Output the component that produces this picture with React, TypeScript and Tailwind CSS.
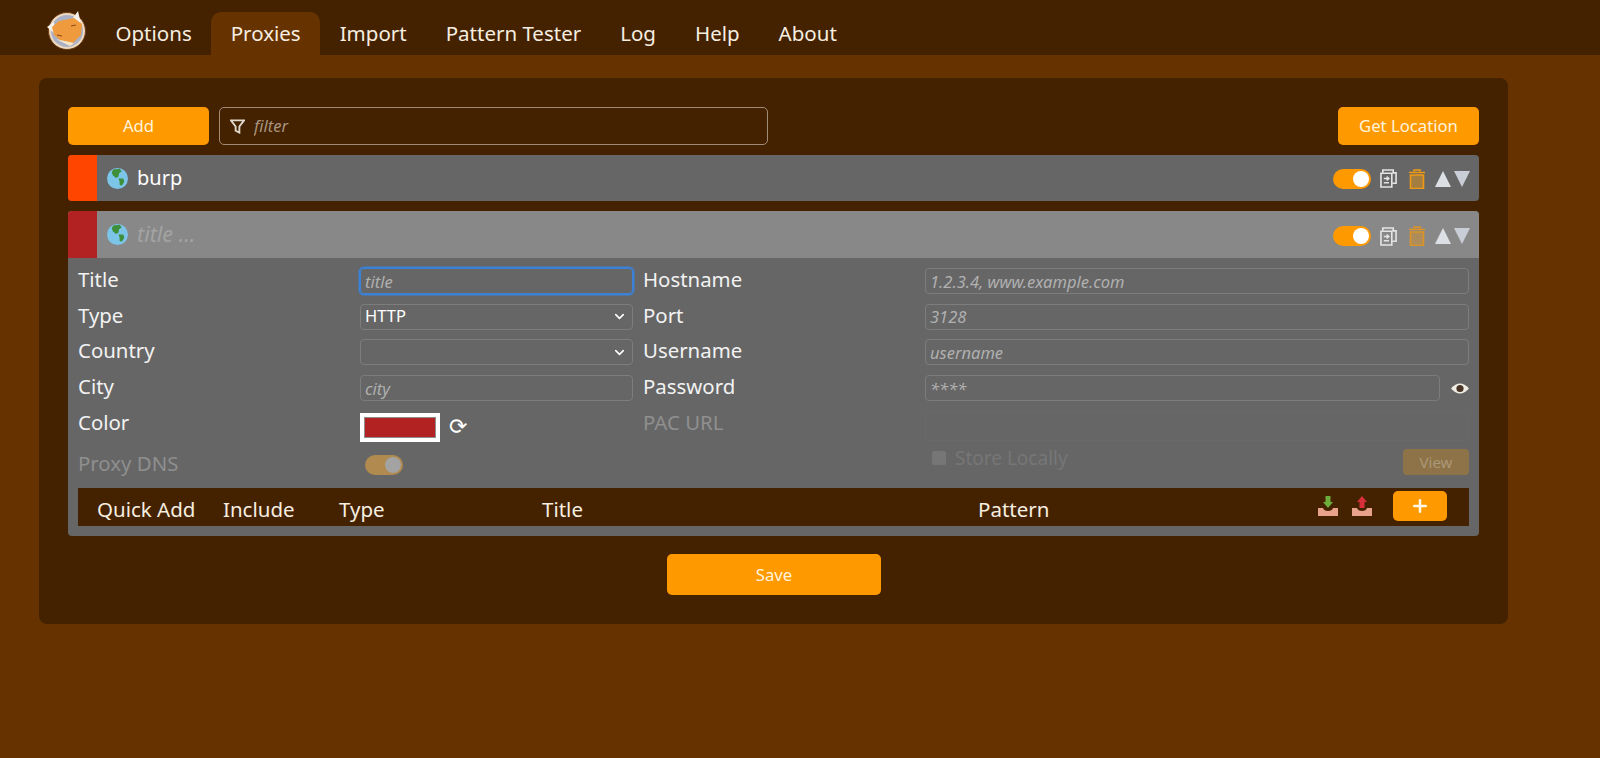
import { ChevronDown, Plus } from "lucide-react";

const FONT = "[font-family:'Noto_Sans','Open_Sans',sans-serif]";

const NAV = ["Options", "Proxies", "Import", "Pattern Tester", "Log", "Help", "About"];

function Logo() {
  return (
    <svg viewBox="0 0 42 40" className="w-[42px] h-[40px]">
      <circle cx="21" cy="21" r="18.5" fill="#efd9c0" stroke="#6b3c12" strokeWidth="1" />
      <circle cx="21" cy="21" r="16" fill="#aab1c6" />
      <path d="M8 12 L1 17 L9 24 Z M27 8 L32 1 L35 14 Z" fill="#f4f1ea" />
      <path d="M6 17 L13 11 L28 8 L36 14 L35 25 L27 33 L14 30 L8 25 Z" fill="#ef9a3c" />
      <path d="M10 29 L24 36 L34 29 L28 33 L14 30 Z" fill="#f7e6c8" />
      <path d="M25 16 L30 15 M11 25 L16 26" stroke="#8a4a14" strokeWidth="1" fill="none" />
    </svg>
  );
}

function Globe() {
  return (
    <svg viewBox="0 0 20 20" className="w-[21px] h-[21px]">
      <circle cx="10" cy="10" r="10" fill="#7cc4e8" />
      <path d="M6 1.5 L12 .6 L14 3 L11.5 5 L11 8 L8.5 9.5 L5.5 7 L4.5 4 Z" fill="#3f8f3a" />
      <path d="M11 10 L15.5 10 L16.5 13 L14 17 L12 16 L12 13 Z" fill="#3f8f3a" />
    </svg>
  );
}

function Copy() {
  return (
    <svg viewBox="0 0 18 20" className="w-[17px] h-[19px]" fill="none" stroke="#e4e4e4" strokeWidth="1.7">
      <path d="M3 4 V1 H14 V4" />
      <path d="M13 4 H17 V15 H13" />
      <path d="M1 4.5 H12.5 V19 H1 Z" />
      <path d="M4 10 H9 M7 8 L9.5 10 L7 12 M9.5 14.5 H4" strokeWidth="1.4" />
    </svg>
  );
}

function Trash({ faded }: { faded?: boolean }) {
  const c = faded ? "#dd9424" : "#f09a14";
  return (
    <svg viewBox="0 0 16 20" className="w-[16px] h-[20px]">
      <path d="M5 2.5 V1 H11 V2.5 M0 3.5 H16" stroke={c} strokeWidth="1.6" fill="none" />
      <path d="M1.5 6 H14.5 V19.5 H1.5 Z" stroke={c} strokeWidth="1.6" fill={c} fillOpacity="0.45" />
    </svg>
  );
}

function Toggle({ faded }: { faded?: boolean }) {
  return (
    <div
      className={`w-[38px] h-[20px] rounded-full flex items-center justify-end px-[2px] ${
        faded ? "bg-[#b08a4e]" : "bg-[#ff9900]"
      }`}
    >
      <div className={`w-[16px] h-[16px] rounded-full ${faded ? "bg-[#a3a3a3]" : "bg-white"}`} />
    </div>
  );
}

function RowIcons({ faded }: { faded?: boolean }) {
  return (
    <div className={`flex items-center mr-[8px] ${faded ? "mt-[3px]" : "mt-[1px]"}`}>
      <Toggle />
      <div className="ml-[9px]">
        <Copy />
      </div>
      <div className="ml-[12px]">
        <Trash faded={faded} />
      </div>
      <svg viewBox="0 0 36 16" className="w-[36px] h-[16px] ml-[10px]">
        <path d="M0 16 L8 0 L16 16 Z" fill="#dcdfe4" />
        <path d="M19 0 L35 0 L27 16 Z" fill="#c9ced6" />
      </svg>
    </div>
  );
}

function Tray({ arrow, up }: { arrow: string; up?: boolean }) {
  return (
    <svg viewBox="0 0 20 22" className="w-[20px] h-[22px]">
      <path d="M0 13 H5 Q6 16 10 16 Q14 16 15 13 H20 V21 H0 Z" fill="#e8a28c" />
      <path
        d={up ? "M10 1 L15 7 H12.5 V13 H7.5 V7 H5 Z" : "M7.5 1 H12.5 V7 H15 L10 13 L5 7 H7.5 Z"}
        fill={arrow}
      />
    </svg>
  );
}

function Label({ children, faded }: { children: string; faded?: boolean }) {
  return (
    <div className={`text-[20.4px] leading-[26px] pb-[4px] ${faded ? "text-[#8f8f8f]" : "text-[#f2f2f2]"}`}>
      {children}
    </div>
  );
}

const inputBase =
  "block h-[26px] w-full rounded-[4px] border bg-transparent px-[4px] text-[16.5px] placeholder:italic placeholder:text-[#b0b0b0]";
const inputCls = `${inputBase} border-[#7d7d7d] outline-none`;

function Select({ value }: { value?: string }) {
  return (
    <div className="h-[26px] rounded-[4px] border border-[#7d7d7d] flex items-center justify-between pl-[4px] pr-[5px] text-[16.5px] text-white">
      <span>{value}</span>
      <ChevronDown size={15} strokeWidth={2.5} />
    </div>
  );
}

export default function App() {
  return (
    <div className={`min-h-[758px] bg-[#663300] text-white ${FONT}`}>
      <nav className="h-[55px] bg-[#442200] flex items-end pl-[46px]">
        <div className="mb-[5px] mr-[8px]">
          <Logo />
        </div>
        {NAV.map((item) => (
          <div
            key={item}
            className={`h-[43px] px-[19.5px] flex items-center text-[20.5px] rounded-t-[10px] text-[#f6eee0] ${
              item === "Proxies" ? "bg-[#663300]" : ""
            }`}
          >
            {item}
          </div>
        ))}
      </nav>

      <main className="ml-[39px] mt-[23px] w-[1469px] h-[546px] rounded-[8px] bg-[#442200] pt-[29px] px-[29px]">
        <div className="flex items-center h-[38px]">
          <button className="w-[141px] h-full rounded-[5px] bg-[#ff9900] text-[16.7px] text-[#fff3dc]">Add</button>
          <div className="ml-[10px] w-[549px] h-full rounded-[5px] border border-[#a08a78] flex items-center pl-[10px]">
            <svg viewBox="0 0 16 16" className="w-[15px] h-[15px] shrink-0" fill="none" stroke="#e0d8cc" strokeWidth="2">
              <path d="M1 1.5 H15 L10 8 V14.5 L6 12.5 V8 Z" />
            </svg>
            <input
              placeholder="filter"
              className="ml-[9px] w-full bg-transparent text-[16.5px] outline-none placeholder:italic placeholder:text-[#a8947e]"
            />
          </div>
          <button className="ml-auto w-[141px] h-full rounded-[5px] bg-[#ff9900] text-[16.7px] text-[#fff3dc]">
            Get Location
          </button>
        </div>

        <div className="mt-[10px] h-[46px] rounded-[4px] bg-[#666666] flex items-center overflow-hidden">
          <div className="w-[29px] h-full bg-[#ff4500] shrink-0" />
          <div className="ml-[10px]">
            <Globe />
          </div>
          <span className="ml-[9px] text-[20px] flex-1">burp</span>
          <RowIcons />
        </div>

        <div className="mt-[10px] h-[325px] rounded-[4px] bg-[#666666] overflow-hidden">
          <div className="h-[47px] bg-[#888888] flex items-center">
            <div className="w-[29px] h-full bg-[#b22222] shrink-0" />
            <div className="ml-[10px]">
              <Globe />
            </div>
            <span className="ml-[9px] text-[21.5px] italic text-[#a3a3a3] flex-1">title ...</span>
            <RowIcons faded />
          </div>

          <div className="px-[10px]">
            <div className="pt-[10px] grid grid-cols-[282px_283px_282px_1fr] auto-rows-[26px] gap-y-[9.7px] items-center">
              <Label>Title</Label>
              <div className="pr-[10px]">
                <input
                  placeholder="title"
                  className={`${inputBase} border-[#3b82d6] shadow-[0_0_0_1.5px_#3b82d6] outline-none`}
                />
              </div>
              <Label>Hostname</Label>
              <input placeholder="1.2.3.4, www.example.com" className={inputCls} />

              <Label>Type</Label>
              <div className="pr-[10px]">
                <Select value="HTTP" />
              </div>
              <Label>Port</Label>
              <input placeholder="3128" className={inputCls} />

              <Label>Country</Label>
              <div className="pr-[10px]">
                <Select />
              </div>
              <Label>Username</Label>
              <input placeholder="username" className={inputCls} />

              <Label>City</Label>
              <div className="pr-[10px]">
                <input placeholder="city" className={inputCls} />
              </div>
              <Label>Password</Label>
              <div className="flex items-center">
                <input placeholder="****" className={inputCls} />
                <svg viewBox="0 0 20 14" className="w-[18px] h-[13px] ml-[11px] shrink-0">
                  <path d="M0 7 Q10 -4 20 7 Q10 18 0 7 Z" fill="#f0ece6" />
                  <circle cx="10" cy="7" r="4" fill="#4a3626" />
                </svg>
              </div>

              <div className="self-start -mt-[2px]">
                <Label>Color</Label>
              </div>
              <div className="flex items-center self-start mt-[2px]">
                <div className="w-[80px] h-[29px] bg-white p-[4px] shrink-0">
                  <div className="w-full h-full bg-[#b22222] border border-[#8f8f8f]" />
                </div>
                <span className="ml-[9px] text-[22px] leading-none font-['DejaVu_Sans'] text-white">⟳</span>
              </div>
              <div className="self-start -mt-[2px]">
                <Label faded>PAC URL</Label>
              </div>
              <div className="self-start h-[30px] rounded-[4px] border border-[#696969]" />
            </div>

            <div className="mt-[7px] grid grid-cols-[282px_283px_282px_1fr] h-[26px] items-center">
              <div className="pt-[6px]">
                <Label faded>Proxy DNS</Label>
              </div>
              <div className="pl-[5px] pt-[6px]">
                <Toggle faded />
              </div>
              <div />
              <div className="flex items-center justify-between">
                <div className="flex items-center text-[19px] text-[#767676] pl-[7px] pb-[7px]">
                  <div className="w-[14px] h-[14px] rounded-[2px] bg-[#767676] mr-[9px]" />
                  Store Locally
                </div>
                <div className="w-[66px] h-[26px] rounded-[4px] bg-[#8f7348] text-[#ab9878] text-[15px] flex items-center justify-center">
                  View
                </div>
              </div>
            </div>

            <div className="mt-[18px] h-[38px] bg-[#442200] flex items-center text-[20.5px] text-[#f6eee0]">
              <span className="ml-[19px] w-[126px] pt-[5px]">Quick Add</span>
              <span className="w-[116px] pt-[5px]">Include</span>
              <span className="w-[203px] pt-[5px]">Type</span>
              <span className="w-[436px] pt-[5px]">Title</span>
              <span className="flex-1 pt-[5px]">Pattern</span>
              <div className="flex items-center mb-[2px]">
                <Tray arrow="#6cae3c" />
                <div className="ml-[14px]">
                  <Tray arrow="#d8303a" up />
                </div>
                <button className="ml-[21px] mr-[22px] w-[54px] h-[30px] rounded-[5px] bg-[#ff9900] flex items-center justify-center">
                  <Plus size={20} strokeWidth={3} color="#fff6e5" />
                </button>
              </div>
            </div>
          </div>
        </div>

        <div className="mt-[18px] flex justify-center">
          <button className="w-[214px] h-[41px] rounded-[5px] bg-[#ff9900] text-[16.7px] text-[#fff3dc] ml-[1px]">
            Save
          </button>
        </div>
      </main>
    </div>
  );
}
